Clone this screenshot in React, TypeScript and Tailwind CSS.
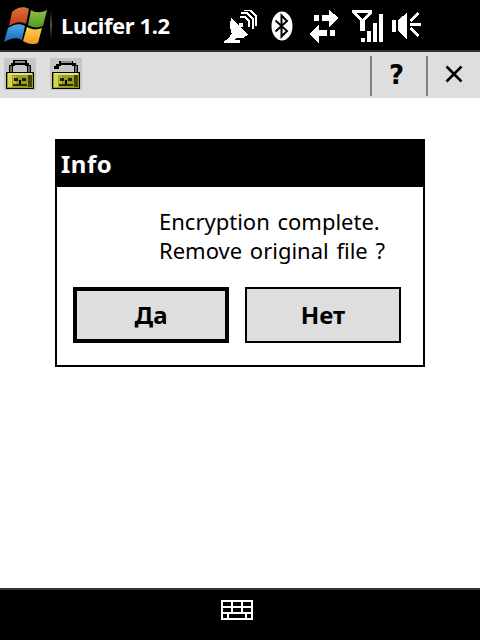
const font = { fontFamily: '"Noto Sans", sans-serif' };

function WindowsLogo() {
  return (
    <svg width="44" height="38" viewBox="0 0 44 38" className="shrink-0">
      <defs>
        <linearGradient id="red" x1="0" y1="0" x2="0" y2="1">
          <stop offset="0" stopColor="#d9723c" />
          <stop offset="1" stopColor="#c23a14" />
        </linearGradient>
        <linearGradient id="green" x1="0" y1="0" x2="0" y2="1">
          <stop offset="0" stopColor="#94bc4a" />
          <stop offset="1" stopColor="#4f9a1e" />
        </linearGradient>
        <linearGradient id="blue" x1="0" y1="0" x2="0" y2="1">
          <stop offset="0" stopColor="#4aa8e8" />
          <stop offset="1" stopColor="#1e66b8" />
        </linearGradient>
        <linearGradient id="yellow" x1="0" y1="0" x2="0" y2="1">
          <stop offset="0" stopColor="#fdd04e" />
          <stop offset="1" stopColor="#f09a1c" />
        </linearGradient>
      </defs>
      <path d="M9 6C14 1 21 0 26 3L23 18C18 15 12 16 6 20Z" fill="url(#red)" />
      <path d="M28 4C32 7 38 7 44 4L40 20C35 22 30 22 25 19Z" fill="url(#green)" />
      <path d="M5 22C11 18 17 17 22 20L19 34C14 31 8 32 1 36Z" fill="url(#blue)" />
      <path d="M24 21C29 24 34 24 39 22L35 37C30 39 25 38 20 35Z" fill="url(#yellow)" />
    </svg>
  );
}

function Lock({ open }: { open?: boolean }) {
  return (
    <div className="w-8 h-8 bg-[#c6c6c6] shrink-0">
      <svg width="32" height="32" viewBox="0 0 32 32" shapeRendering="crispEdges">
        {open ? (
          <>
            <path d="M4 11V8H6V6H9V3H23V5H26V7H28V15H24V8H22V7H11V8H9V11Z" fill="#000" />
            <rect x="11" y="3" width="11" height="2" fill="#8c8c8c" />
            <rect x="25" y="8" width="2" height="6" fill="#6a6a6a" />
          </>
        ) : (
          <>
            <path d="M5 15V7H7V5H9V2H23V5H25V7H27V15H23V8H21V7H11V8H9V15Z" fill="#000" />
            <rect x="11" y="3" width="10" height="2" fill="#8c8c8c" />
            <rect x="6" y="8" width="2" height="6" fill="#6a6a6a" />
            <rect x="24" y="8" width="2" height="6" fill="#6a6a6a" />
          </>
        )}
        <rect x="2" y="14" width="28" height="17" fill="#000" />
        <rect x="3" y="15" width="26" height="15" fill="#9c9c1c" />
        <rect x="4" y="15" width="24" height="2" fill="#e0e080" />
        <rect x="4" y="17" width="4" height="12" fill="#d4d458" />
        <rect x="9" y="18" width="3" height="10" fill="#b8b830" />
        <rect x="24" y="17" width="4" height="12" fill="#44440a" />
        <rect x="10" y="20" width="4" height="3" fill="#1c1c04" />
        <rect x="15" y="22" width="2" height="4" fill="#000" />
        <rect x="18" y="20" width="4" height="3" fill="#1c1c04" />
        <rect x="9" y="26" width="14" height="2" fill="#2c2c06" />
      </svg>
    </div>
  );
}

function DishIcon() {
  return (
    <svg width="33" height="33" viewBox="0 0 33 33" fill="#fff" shapeRendering="crispEdges" className="shrink-0">
      <path d="M7 8L24 25L19 28H12L7 22L6 15Z" />
      <path d="M12 28L8 33H0V31L4 29L9 22Z" />
      <rect x="8" y="30" width="8" height="3" />
      <rect x="15" y="13" width="4" height="4" />
      <g fill="none" stroke="#fff" strokeWidth="2">
        <path d="M16 7H21L25 11V17" />
        <path d="M17 3H23L29 9V19" />
        <path d="M20 0H26L32 6V16" />
      </g>
    </svg>
  );
}

function BluetoothIcon() {
  return (
    <svg width="22" height="30" viewBox="0 0 22 30" className="shrink-0">
      <ellipse cx="11" cy="15" rx="10.500" ry="14.500" fill="#fff" />
      <path d="M4.500 9.500L16 20L10.500 25.500V4.500L16 10L4.500 20.500" fill="none" stroke="#000" strokeWidth="2" />
    </svg>
  );
}

function ArrowsIcon() {
  return (
    <svg width="31" height="33" viewBox="0 0 31 33" fill="#fff" shapeRendering="crispEdges" className="shrink-0">
      <rect x="5" y="5" width="5" height="6" />
      <path d="M13 5H20V0L30 8L20 17V11H13Z" />
      <rect x="21" y="20" width="5" height="6" />
      <path d="M18 20H10V15L0 24L10 33V26H18Z" />
    </svg>
  );
}

function SignalIcon() {
  return (
    <svg width="33" height="34" viewBox="0 0 33 34" fill="#fff" shapeRendering="crispEdges" className="shrink-0">
      <path fillRule="evenodd" d="M1 1H21V4L14 12V22H9V12L1 4ZM6 4L11.500 10L17 4Z" />
      <rect x="10" y="29" width="4" height="4" />
      <rect x="16" y="22" width="4" height="11" />
      <rect x="22" y="14" width="4" height="19" />
      <rect x="28" y="5" width="4" height="28" />
    </svg>
  );
}

function SpeakerIcon() {
  return (
    <svg width="31" height="30" viewBox="0 0 31 30" fill="#fff" shapeRendering="crispEdges" className="shrink-0">
      <rect x="1" y="9" width="4" height="12" />
      <path d="M7 9L16 2V28L7 20Z" />
      <rect x="19" y="12" width="11" height="3" />
      <path d="M18 9L26 1L28 3L20 11Z" />
      <path d="M18 18L20 16L28 24L26 26Z" />
    </svg>
  );
}

function CloseIcon() {
  return (
    <svg width="18" height="18" viewBox="0 0 18 18" className="shrink-0">
      <path d="M1.500 1.500L16.500 16.500M16.500 1.500L1.500 16.500" stroke="#000" strokeWidth="2.500" fill="none" />
    </svg>
  );
}

function KeyboardIcon() {
  return (
    <svg width="32" height="20" viewBox="0 0 32 20" shapeRendering="crispEdges">
      <rect width="32" height="20" fill="#fff" />
      <g fill="#000">
        <rect x="2" y="2" width="8" height="4" />
        <rect x="12" y="2" width="8" height="4" />
        <rect x="22" y="2" width="8" height="4" />
        <rect x="2" y="8" width="8" height="4" />
        <rect x="12" y="8" width="8" height="4" />
        <rect x="22" y="8" width="8" height="4" />
        <rect x="2" y="14" width="4" height="4" />
        <rect x="8" y="14" width="16" height="4" />
        <rect x="26" y="14" width="4" height="4" />
      </g>
    </svg>
  );
}

function DialogButton({ label, focused }: { label: string; focused?: boolean }) {
  return (
    <button
      className={`w-[156px] h-14 bg-[#dedede] border-black text-black text-2xl font-bold ${focused ? 'border-4' : 'border-2'}`}
      style={font}
    >
      {label}
    </button>
  );
}

export default function App() {
  return (
    <div className="w-[480px] h-[640px] flex flex-col bg-white overflow-hidden" style={font}>
      {/* Title bar */}
      <header className="h-[52px] shrink-0 bg-black border-b-2 border-[#333333] flex items-center">
        <div className="ml-[3px]">
          <WindowsLogo />
        </div>
        <div className="w-0.5 h-[38px] ml-[3px] bg-gradient-to-b from-black via-[#555555] to-black" />
        <span className="ml-[9px] w-[163px] text-white text-[22px] font-bold tracking-[-0.4px] whitespace-nowrap">Lucifer 1.2</span>
        <div className="flex items-center pt-0.5">
          <DishIcon />
          <div className="ml-3.5"><BluetoothIcon /></div>
          <div className="ml-4"><ArrowsIcon /></div>
          <div className="ml-[11px]"><SignalIcon /></div>
          <div className="ml-[7px]"><SpeakerIcon /></div>
        </div>
      </header>

      {/* Toolbar */}
      <div className="h-[46px] shrink-0 bg-[#dedede] flex items-start">
        <div className="ml-1 mt-1.5"><Lock /></div>
        <div className="ml-3.5 mt-1.5"><Lock open /></div>
        <div className="w-0.5 h-10 ml-[288px] mt-1 bg-[#808080]" />
        <span className="w-[49px] mr-[5px] mt-[3px] text-center text-black text-[26px] leading-10 font-bold" style={{ fontFamily: '"DejaVu Sans", sans-serif' }}>?</span>
        <div className="w-0.5 h-10 mt-1 bg-[#808080]" />
        <div className="ml-[17px] mt-[13px]"><CloseIcon /></div>
      </div>

      {/* Content */}
      <main className="flex-1 pt-[41px] pl-[55px]">
        <div className="w-[370px] h-[228px] border-2 border-black flex flex-col">
          <div className="h-[46px] shrink-0 bg-black text-white text-2xl font-bold pl-1 flex items-center tracking-[0.5px]">Info</div>
          <p className="mt-5 ml-[102px] text-black text-[22px] leading-[29px] whitespace-nowrap [word-spacing:2px]">
            Encryption complete.
            <br />
            Remove original file ?
          </p>
          <div className="mt-[22px] ml-4 flex gap-4">
            <DialogButton label="Да" focused />
            <DialogButton label="Нет" />
          </div>
        </div>
      </main>

      {/* Bottom bar */}
      <footer className="h-[52px] shrink-0 bg-black border-t-2 border-[#333333] flex pl-[221px] pt-2.5">
        <KeyboardIcon />
      </footer>
    </div>
  );
}
